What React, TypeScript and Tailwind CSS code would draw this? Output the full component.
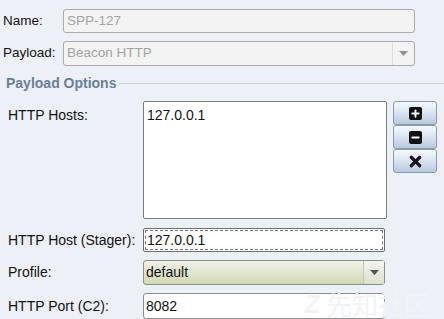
import { Minus, Plus, X } from "lucide-react";

const font = { fontFamily: '"Liberation Sans", Arial, sans-serif' };

function Caret() {
  return (
    <svg width="9" height="5" viewBox="0 0 9 5">
      <path d="M0 0h9L4.5 5z" fill="#555" />
    </svg>
  );
}

function IconButton({ children }: { children: React.ReactNode }) {
  return (
    <button className="flex h-[24px] w-[44px] items-center justify-center rounded-[3px] border border-[#8a9bb3] bg-gradient-to-b from-[#f6f9fd] via-[#d9e3f0] to-[#b9c9de]">
      {children}
    </button>
  );
}

export default function App() {
  return (
    <div
      className="relative h-[319px] w-[444px] overflow-hidden bg-[#eef0f8] text-[14px] text-[#111]"
      style={font}
    >
      {/* top rows */}
      <div className="flex flex-col gap-[8px] pt-[9px] pl-[3px] pr-[29px]">
        <div className="flex items-center">
          <span className="w-[60px] text-[13.5px]">Name:</span>
          <div className="flex h-[24px] flex-1 items-center rounded-[3px] border border-[#ababab] bg-[#f4f3f3] px-[3px] text-[13.5px] text-[#a3a3a3]">
            SPP-127
          </div>
        </div>
        <div className="flex items-center">
          <span className="w-[60px] text-[13.5px]">Payload:</span>
          <div className="flex h-[25px] flex-1 items-center rounded-[3px] border border-[#ababab] bg-[#f4f3f3] pl-[3px] text-[13.5px] text-[#a3a3a3]">
            <span className="flex-1">Beacon HTTP</span>
            <div className="flex h-full w-[22px] items-center justify-center border-l border-[#d0d0d0] opacity-60">
              <Caret />
            </div>
          </div>
        </div>
      </div>

      {/* section header */}
      <div className="mt-[7px] flex items-center pl-[6px]">
        <span className="text-[14px] font-bold text-[#6a7f98]">Payload Options</span>
        <div className="ml-[2px] h-px flex-1 bg-[#cfd2da]" />
      </div>

      {/* options */}
      <div className="mt-[7px] flex flex-col pl-[8px]">
        <div className="flex">
          <span className="mt-[4px] w-[135px]">HTTP Hosts:</span>
          <div className="h-[118px] w-[244px] rounded-[2px] border border-[#7c7c7c] bg-white px-[3px] pt-[3px]">
            127.0.0.1
          </div>
          <div className="ml-[6px] flex flex-col">
            <IconButton>
              <span className="flex h-[13px] w-[13px] items-center justify-center rounded-[2px] bg-[#111]">
                <Plus size={11} strokeWidth={4} color="#fff" />
              </span>
            </IconButton>
            <IconButton>
              <span className="flex h-[13px] w-[13px] items-center justify-center rounded-[2px] bg-[#111]">
                <Minus size={11} strokeWidth={4} color="#fff" />
              </span>
            </IconButton>
            <IconButton>
              <X size={17} strokeWidth={4.5} color="#1a1420" />
            </IconButton>
          </div>
        </div>

        <div className="mt-[9px] flex items-center">
          <span className="w-[135px]">HTTP Host (Stager):</span>
          <div className="h-[24px] w-[242px] rounded-[2px] border border-[#6e6e6e] bg-white p-[1px]">
            <div className="flex h-full items-center border border-dashed border-[#777] px-[1px]">
              127.0.0.1
            </div>
          </div>
        </div>

        <div className="mt-[8px] flex items-center">
          <span className="w-[135px]">Profile:</span>
          <div className="flex h-[25px] w-[242px] items-center rounded-[3px] border border-[#8e8e86] bg-gradient-to-b from-[#f1f1e8] to-[#d3d9b6] pl-[2px]">
            <span className="flex-1">default</span>
            <div className="flex h-full w-[21px] items-center justify-center border-l border-[#c4c6b8] bg-gradient-to-b from-[#f4f4ee] to-[#dde1cb]">
              <Caret />
            </div>
          </div>
        </div>

        <div className="mt-[8px] flex items-center">
          <span className="w-[135px]">HTTP Port (C2):</span>
          <div className="flex h-[26px] w-[242px] items-center rounded-[3px] border border-[#8e8e8e] bg-white px-[2px]">
            8082
          </div>
        </div>
      </div>

      {/* faint watermark */}
      <div className="pointer-events-none absolute right-[14px] bottom-0 flex items-center gap-[6px] text-[26px] leading-[30px] text-[#f1f3f8]">
        <span className="font-bold italic">Z</span>
        <span style={{ fontFamily: '"Noto Sans CJK SC", sans-serif' }}>先知社区</span>
      </div>
    </div>
  );
}
